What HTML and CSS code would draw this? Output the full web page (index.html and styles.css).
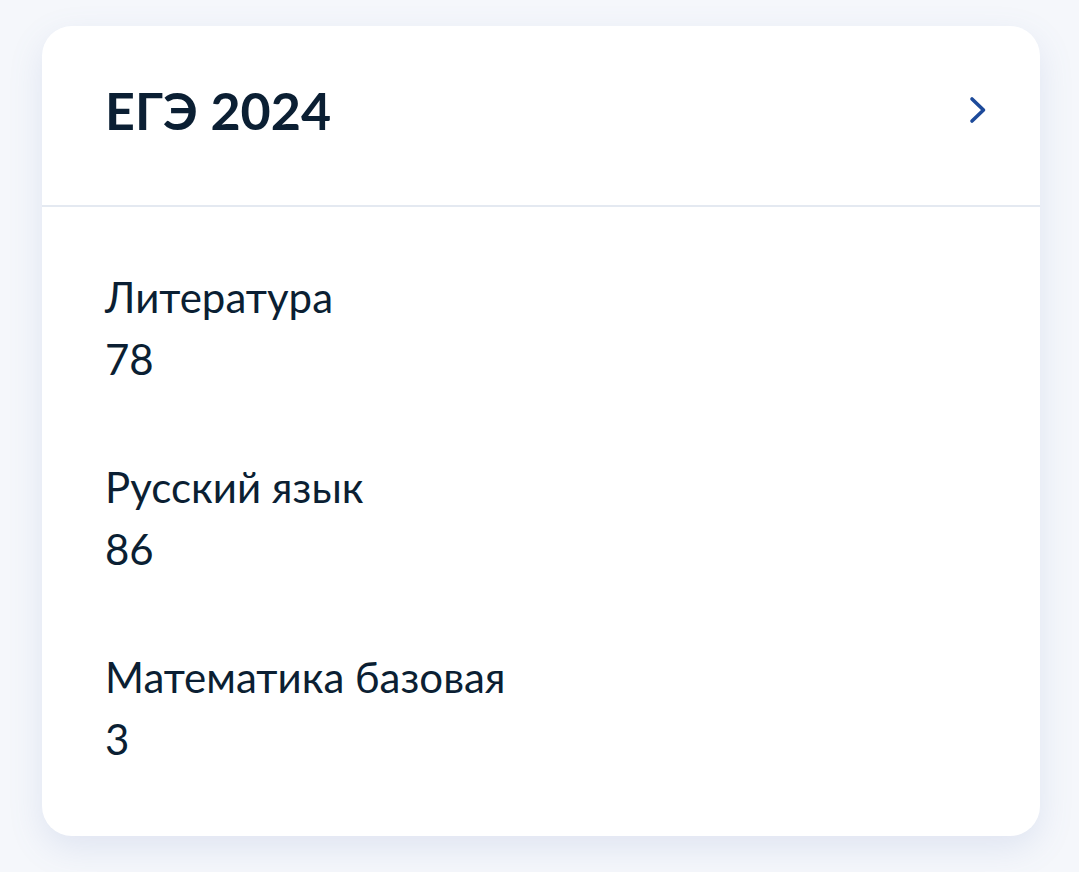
FILE: index.html
```html
<!DOCTYPE html>
<html lang="ru">
<head>
<meta charset="utf-8">
<link rel="stylesheet" href="styles.css">
</head>
<body>
<div class="card">
  <div class="card-header">
    <h1 class="title">ЕГЭ 2024</h1>
    <svg class="chevron" width="20" height="28" viewBox="0 0 20 28" aria-hidden="true">
      <polyline points="4,3 15.5,14 4,25" fill="none" stroke="#1d4a9a" stroke-width="3.6" stroke-linecap="round" stroke-linejoin="round"/>
    </svg>
  </div>
  <div class="card-body">
    <div class="item">
      <div class="label">Литература</div>
      <div class="value">78</div>
    </div>
    <div class="item">
      <div class="label">Русский язык</div>
      <div class="value">86</div>
    </div>
    <div class="item">
      <div class="label">Математика базовая</div>
      <div class="value">3</div>
    </div>
  </div>
</div>
</body>
</html>
```

FILE: styles.css
```css
html, body {
  margin: 0;
  padding: 0;
}
body {
  background: #f5f7fb;
  font-family: Lato, "Open Sans", sans-serif;
  color: #0b1f33;
  width: 1079px;
  height: 872px;
  overflow: hidden;
}
.card {
  margin: 26px 0 0 42px;
  width: 998px;
  height: 810px;
  box-sizing: border-box;
  background: #ffffff;
  border-radius: 30px;
  box-shadow: 0 12px 34px rgba(100, 130, 190, 0.15);
  display: flex;
  flex-direction: column;
}
.card-header {
  display: flex;
  align-items: center;
  justify-content: space-between;
  padding: 0 52px 0 63px;
  height: 181px;
  box-sizing: border-box;
  border-bottom: 2px solid #e4e9f1;
}
.title {
  margin: 0;
  font-size: 52px;
  font-weight: 700;
  line-height: 60px;
  position: relative;
  top: -6px;
}
.chevron {
  display: block;
  position: relative;
  top: -6px;
}
.card-body {
  padding: 59px 63px 0;
  display: flex;
  flex-direction: column;
  gap: 66px;
}
.item {
  display: flex;
  flex-direction: column;
}
.label, .value {
  font-size: 42px;
  line-height: 62px;
  font-weight: 400;
}
```
